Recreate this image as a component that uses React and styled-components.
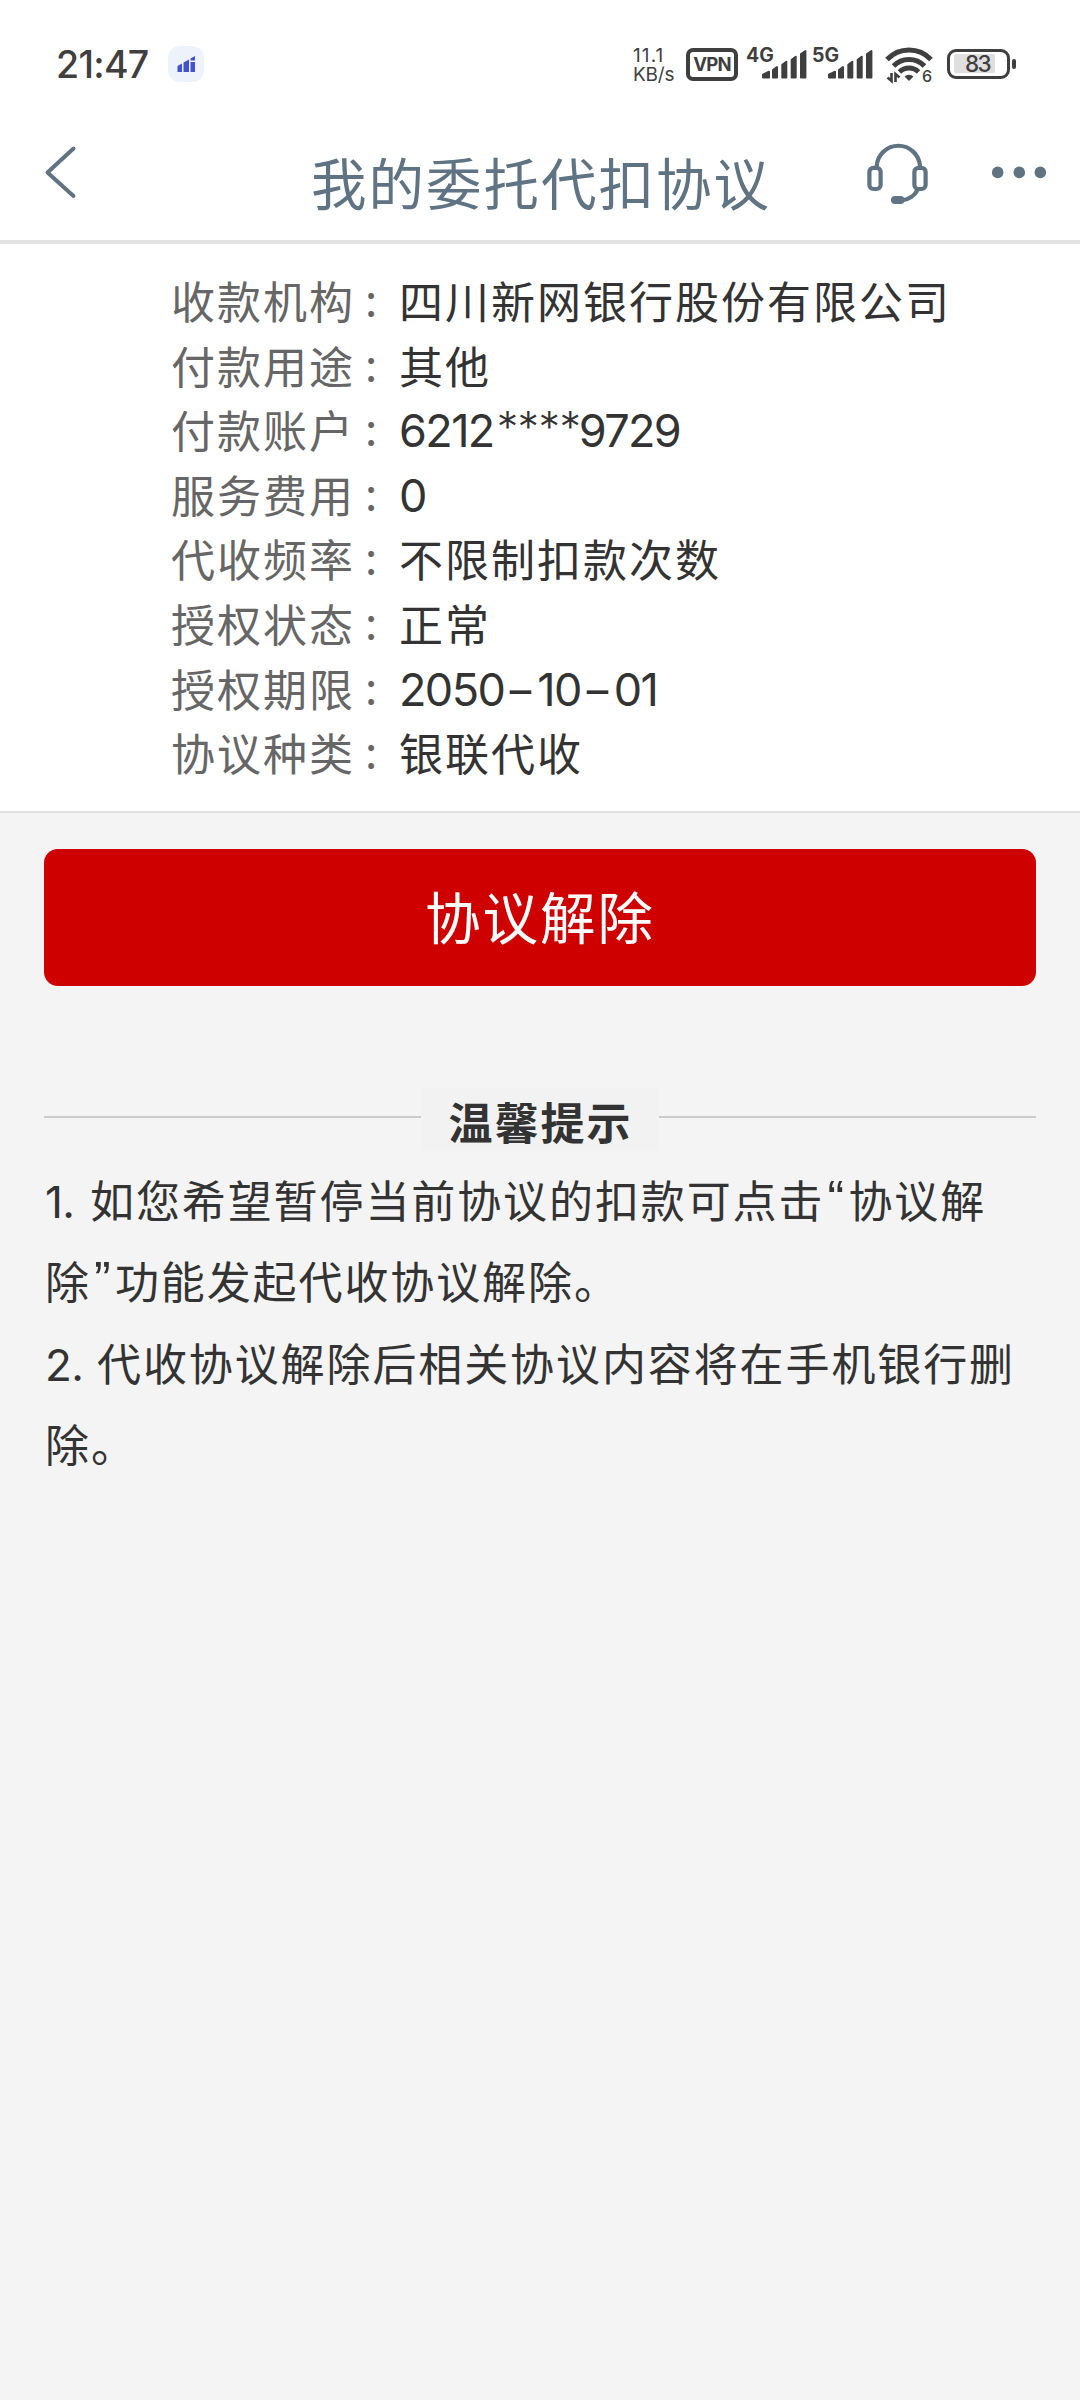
import React from "react";
import styled, { createGlobalStyle, css } from "styled-components";

const cjk = `"Noto Sans CJK SC", sans-serif`;
const ink = "#333333";
const slate = "#5f7383";

const GlobalStyle = createGlobalStyle`
  * { box-sizing: border-box; }
  html, body { margin: 0; padding: 0; background: #f4f4f4; }
  body { font-family: Inter, ${cjk}; color: ${ink}; }
`;

const Screen = styled.div`
  width: 1080px;
  min-height: 2400px;
  display: flex;
  flex-direction: column;
  background: #f4f4f4;
`;

const StatusBar = styled.header`
  height: 128px;
  padding: 46px 64px 0 56px;
  display: flex;
  align-items: flex-start;
  justify-content: space-between;
  background: #fff;
  color: #3f3f3f;
`;

const StatusGroup = styled.div`
  display: flex;
  align-items: flex-start;
  height: 38px;
`;

const Clock = styled.time`
  width: 112px;
  font-size: 37.5px;
  font-weight: 500;
  line-height: 38px;
  letter-spacing: -0.7px;
  white-space: nowrap;
`;

const Speed = styled.div`
  width: 53px;
  display: flex;
  flex-direction: column;
  font-size: 19px;
  line-height: 19px;
`;

const SpeedLine = styled.span`
  letter-spacing: ${(p) => p.$track}px;
`;

const Vpn = styled.div`
  width: 52px;
  height: 33px;
  margin: 2px 8px 0 0;
  border: 4px solid #3f3f3f;
  border-radius: 7px;
  font-size: 18.5px;
  font-weight: 700;
  line-height: 25px;
  text-align: center;
  letter-spacing: -0.8px;
`;

const Cell = styled.div`
  position: relative;
  width: ${(p) => p.$width}px;
  height: 34px;
`;

const CellTag = styled.span`
  position: absolute;
  left: 0;
  top: 1px;
  font-size: 19.5px;
  font-weight: 700;
  line-height: 16px;
  letter-spacing: 0;
`;

const WifiBox = styled.div`
  position: relative;
  width: 62px;
  height: 38px;
`;

const WifiGen = styled.span`
  position: absolute;
  left: 37px;
  top: 22px;
  font-size: 16px;
  font-weight: 500;
  line-height: 16px;
`;

const Battery = styled.div`
  display: flex;
  align-items: center;
  margin-top: 3px;
  gap: 2px;
`;

const BatteryShell = styled.div`
  width: 63px;
  height: 30px;
  padding: 2px 4px;
  border: 3.5px solid #3f3f3f;
  border-radius: 9px;
`;

const BatteryLevel = styled.div`
  width: 41px;
  height: 19px;
  padding-left: 11px;
  border-radius: 2px;
  background: #dfdfdf;
  font-size: 22.5px;
  font-weight: 500;
  line-height: 20px;
  letter-spacing: -1.6px;
`;

const BatteryTip = styled.div`
  width: 4px;
  height: 10px;
  border-radius: 2px;
  background: #3f3f3f;
`;

const NavBar = styled.nav`
  height: 116px;
  display: grid;
  grid-template-columns: 311px 457px 312px;
  background: #fff;
  border-bottom: 4px solid #e4e4e4;
`;

const Back = styled.button`
  width: 50px;
  height: 60px;
  margin: 14px 0 0 36px;
  padding: 0;
  border: 0;
  background: none;
`;

const Title = styled.h1`
  margin: 23px 0 0;
  font-family: ${cjk};
  font-size: 55.5px;
  font-weight: 400;
  line-height: 60px;
  letter-spacing: 2px;
  color: ${slate};
  white-space: nowrap;
`;

const NavActions = styled.div`
  display: flex;
  padding: 12px 0 0 95px;
  gap: 58px;
`;

const Details = styled.dl`
  margin: 0;
  height: 569px;
  padding: 24px 0 0 171px;
  background: #fff;
  border-bottom: 2px solid #e0e0e0;
`;

const Row = styled.div`
  display: flex;
  height: 64.6px;
  line-height: 64px;
  font-size: 44px;
  letter-spacing: 2px;
  white-space: nowrap;
`;

const Term = styled.dt`
  display: flex;
  width: 228px;
  color: #666;
  font-family: ${cjk};
`;

const Colon = styled.span`
  margin-left: 10px;
  line-height: 58px;
`;

const Value = styled.dd`
  margin: 0;
  font-family: ${cjk};
  ${(p) =>
    p.$latin &&
    css`
      padding-top: 2px;
      font-family: Inter, sans-serif;
      font-size: 45px;
      letter-spacing: -1.6px;
    `}
`;

const Mask = styled.span`
  display: inline-block;
  width: 85px;
  padding-left: 3px;
  font-size: 43px;
  font-weight: 300;
  line-height: 50px;
  letter-spacing: -0.6px;
  vertical-align: 4px;
`;

const Dash = styled.span`
  display: inline-block;
  width: 33px;
  text-align: center;
  letter-spacing: 0;
  transform: scaleX(1.5);
`;

const Content = styled.main`
  padding: 36px 44px 0;
`;

const CancelButton = styled.button`
  display: block;
  width: 100%;
  height: 137px;
  padding: 0 0 4px;
  border: 0;
  border-radius: 14px;
  background: #ce0000;
  color: #fff;
  font-family: ${cjk};
  font-size: 55.5px;
  line-height: 133px;
  letter-spacing: 2px;
`;

const NoticeHeader = styled.div`
  display: flex;
  align-items: flex-start;
  height: 63px;
  margin-top: 102px;
`;

const Rule = styled.i`
  flex: 1;
  height: 2px;
  margin-top: 28px;
  background: #cbcbcb;
`;

const NoticeTitle = styled.h2`
  width: 238px;
  height: 63px;
  margin: 0;
  padding-left: 1px;
  background: #f2f2f2;
  font-family: ${cjk};
  font-size: 44px;
  font-weight: 700;
  line-height: 67px;
  letter-spacing: 2px;
  text-align: center;
`;

const Notice = styled.div`
  padding: 8px 0 0 1px;
`;

const Line = styled.div`
  display: flex;
  height: 81.3px;
  line-height: 81px;
  font-family: ${cjk};
  font-size: 44px;
  letter-spacing: 1.9px;
  white-space: nowrap;
`;

const Ordinal = styled.span`
  width: ${(p) => p.$width}px;
  padding-top: 3px;
  font-family: Inter, sans-serif;
  letter-spacing: -0.6px;
`;

const Quote = styled.span`
  width: 24px;
  padding-left: 3px;
  font-family: "Liberation Sans", sans-serif;
  font-size: 50px;
  letter-spacing: 0;
`;

const details = [
  { term: "收款机构", value: "四川新网银行股份有限公司" },
  { term: "付款用途", value: "其他" },
  { term: "付款账户", value: "6212****9729", latin: true },
  { term: "服务费用", value: "0", latin: true },
  { term: "代收频率", value: "不限制扣款次数" },
  { term: "授权状态", value: "正常" },
  { term: "授权期限", value: "2050-10-01", latin: true },
  { term: "协议种类", value: "银联代收" },
];

function renderNumber(value) {
  return value.split(/(\*+|-)/).map((part, i) => {
    if (part === "-") return <Dash key={i}>{part}</Dash>;
    if (part.startsWith("*")) return <Mask key={i}>{part}</Mask>;
    return part;
  });
}

const bars = [
  [16, 8, 24.7],
  [26, 6, 20],
  [35.3, 6, 14.7],
  [44.7, 6, 9.7],
  [54, 6.4, 4],
];

function Signal({ tag, width }) {
  return (
    <Cell $width={width}>
      <CellTag>{tag}</CellTag>
      <svg width="62" height="34" viewBox="0 0 62 34" fill="#3f3f3f" stroke="#3f3f3f" strokeWidth="2" strokeLinejoin="round">
        {bars.map(([x, w, top]) => (
          <path key={x} d={`M${x + 1} ${top + 4}L${x + w - 1} ${top + 1}V31.5H${x + 1}Z`} />
        ))}
      </svg>
    </Cell>
  );
}

function AppBadge() {
  return (
    <svg width="36" height="36" viewBox="0 0 36 36">
      <rect width="36" height="36" rx="12" fill="#eef2fb" />
      <path d="M9.500 20l4.500-2.500V26H9.500zM15.500 16.500l5.500-3V26h-5.500zM22.500 16h4.500V26h-4.500zM22.500 12.500l4.500-2.500v4.500h-4.500z" fill="#4353cf" />
    </svg>
  );
}

function Wifi() {
  return (
    <WifiBox>
      <svg width="48" height="38" viewBox="0 0 48 38" fill="none" stroke="#3f3f3f" strokeWidth="5">
        <path d="M2 13.500A30 30 0 0 1 46 13.500" />
        <path d="M8.500 20A21.500 21.500 0 0 1 39.500 20" />
        <path d="M14.500 26A13.500 13.500 0 0 1 33.500 26" />
        <path d="M24 35l-4.500-4.500a6.500 6.500 0 0 1 9 0z" fill="#3f3f3f" stroke="none" />
        <path d="M6.500 27v8l-4-3.500M10.500 36v-8l4 3.500" strokeWidth="2.600" />
      </svg>
      <WifiGen>6</WifiGen>
    </WifiBox>
  );
}

export default function App() {
  return (
    <Screen>
      <GlobalStyle />
      <StatusBar>
        <StatusGroup>
          <Clock>21:47</Clock>
          <AppBadge />
        </StatusGroup>
        <StatusGroup>
          <Speed>
            <SpeedLine $track={1.1}>11.1</SpeedLine>
            <SpeedLine $track={-0.2}>KB/s</SpeedLine>
          </Speed>
          <Vpn>VPN</Vpn>
          <Signal tag="4G" width={66} />
          <Signal tag="5G" width={73} />
          <Wifi />
          <Battery>
            <BatteryShell>
              <BatteryLevel>83</BatteryLevel>
            </BatteryShell>
            <BatteryTip />
          </Battery>
        </StatusGroup>
      </StatusBar>
      <NavBar>
        <Back aria-label="返回">
          <svg width="50" height="60" viewBox="0 0 50 60" fill="none" stroke={slate} strokeWidth="4" strokeLinecap="round" strokeLinejoin="round">
            <path d="M37.500 6.500L11.500 30.500L37.500 54" />
          </svg>
        </Back>
        <Title>我的委托代扣协议</Title>
        <NavActions>
          <svg width="67" height="68" viewBox="0 0 67 68" fill="none" stroke={slate} strokeWidth="4.200">
            <path d="M13.700 27V26A21.700 21.700 0 0 1 57 26V27" />
            <rect x="6.400" y="27.800" width="11.200" height="21.200" rx="4" />
            <rect x="51.400" y="27.800" width="11.200" height="21.200" rx="4" />
            <path d="M54.500 50C52 55 46 59.500 39 60.500" />
            <rect x="28" y="56" width="13.500" height="8" rx="4" fill={slate} stroke="none" />
          </svg>
          <svg width="60" height="64" viewBox="0 0 60 64" fill={slate}>
            <circle cx="9.700" cy="32.400" r="5.800" />
            <circle cx="31.300" cy="32.400" r="5.800" />
            <circle cx="52.300" cy="32.400" r="5.800" />
          </svg>
        </NavActions>
      </NavBar>
      <Details>
        {details.map(({ term, value, latin }) => (
          <Row key={term}>
            <Term>
              {term}
              <Colon>:</Colon>
            </Term>
            <Value $latin={latin}>{latin ? renderNumber(value) : value}</Value>
          </Row>
        ))}
      </Details>
      <Content>
        <CancelButton>协议解除</CancelButton>
        <NoticeHeader>
          <Rule />
          <NoticeTitle>温馨提示</NoticeTitle>
          <Rule />
        </NoticeHeader>
        <Notice>
          <Line>
            <Ordinal $width={45}>1.</Ordinal>
            如您希望暂停当前协议的扣款可点击
            <Quote>“</Quote>
            协议解
          </Line>
          <Line>
            除
            <Quote>”</Quote>
            功能发起代收协议解除。
          </Line>
          <Line>
            <Ordinal $width={52}>2.</Ordinal>
            代收协议解除后相关协议内容将在手机银行删
          </Line>
          <Line>除。</Line>
        </Notice>
      </Content>
    </Screen>
  );
}
